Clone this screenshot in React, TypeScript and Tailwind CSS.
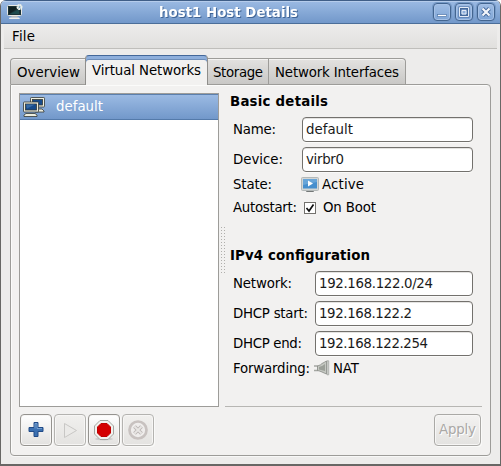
import React from "react";

const font = "font-['DejaVu_Sans',sans-serif]";

function Txt({ w, children, className = "" }: { w: number; children: string; className?: string }) {
  return (
    <svg width={w + 2} height={20} className={`block shrink-0 overflow-visible ${className}`}>
      <text x={0} y={15} textLength={w + 1} fill="currentColor">{children}</text>
    </svg>
  );
}

function Entry({ value, w }: { value: string; w: number }) {
  return (
    <div className="flex h-[25px] flex-1 rounded-[4px] border border-[#73716d] bg-white pl-[3px] text-[#1a1a1a] shadow-[inset_0_1px_0_#e4e3e1,0_1px_0_#fafaf9]">
      <Txt w={w} className="mt-px">{value}</Txt>
    </div>
  );
}

function Field({ label, lw, col, value, w }: { label: string; lw: number; col: string; value: string; w: number }) {
  return (
    <div className="mb-[5px] flex h-[25px] pl-[3px]">
      <div className={`pt-[2px] ${col}`}><Txt w={lw}>{label}</Txt></div>
      <Entry value={value} w={w} />
    </div>
  );
}

function TitleButton({ children }: { children: React.ReactNode }) {
  return (
    <div className="flex h-[18px] w-[18px] items-center justify-center rounded-[4px] border border-[#436590] bg-linear-to-b from-[#a0bde4] to-[#7fa5d6] shadow-[inset_0_0_0_1px_#a5c1e6,0_0_0_1px_#7599c6]">
      <svg width="16" height="16" viewBox="0 0 16 16" className="block shrink-0">{children}</svg>
    </div>
  );
}

function ToolButton({ off, children }: { off?: boolean; children: React.ReactNode }) {
  return (
    <div className={`flex h-8 w-8 items-center justify-center rounded-[4px] border bg-linear-to-b ${off ? "border-[#b4b3b0] from-[#f1f0ee] to-[#e4e3e1]" : "border-[#95938f] from-white to-[#e2e1df]"} shadow-[inset_0_0_0_1px_#f7f6f5,1px_1px_0_#fafaf9]`}>
      {children}
    </div>
  );
}

function Tab({ label, w, cls }: { label: string; w: number; cls: string }) {
  return (
    <div className={`flex h-[26px] border border-b-0 border-[#9d9c99] bg-linear-to-b from-[#e3e2e0] to-[#c9c8c6] pt-[3px] shadow-[inset_0_1px_0_#f4f3f2] ${cls}`}>
      <Txt w={w}>{label}</Txt>
    </div>
  );
}

export default function App() {
  return (
    <div className="h-[466px] w-[501px] bg-white">
      <div className={`flex h-full flex-col overflow-hidden rounded-t-[6px] border-x border-b-2 border-[#686765] bg-[#edeceb] text-[13.333px] leading-5 text-black ${font}`}>
        <header className="flex h-[24px] shrink-0 items-center border-b border-t border-b-[#4b6e99] border-t-[#3f5e87] bg-linear-to-b from-[#9bbae3] to-[#7298ca] pl-[5px] pr-[5px] shadow-[inset_0_1px_0_#b5cceb]">
          <svg width="18" height="18" viewBox="0 0 18 18" className="block">
            <path d="M6 12h5l1 2.500H5z" fill="#b9bab6" />
            <path d="M3.500 14.500h9.500l1 1.500H3z" fill="#eeeeec" />
            <rect x="1.500" y="2.500" width="14" height="10" rx="1" fill="#1b3337" stroke="#e8e8e4" />
            <path d="M3 4h10l-4 3-6 4z" fill="#102022" />
            <path d="M4 11l9-5v5z" fill="#1f4b4d" />
            <circle cx="13.500" cy="4" r="2" fill="#7ca7c1" stroke="#edf1ec" strokeWidth="2" strokeDasharray="1.800 .3" />
          </svg>
          <div className="flex flex-1 justify-center font-bold text-white drop-shadow-[1px_1px_0_#416596]">
            <Txt w={138}>host1 Host Details</Txt>
          </div>
          <div className="flex gap-1">
            <TitleButton><rect x="3.500" y="10.500" width="9" height="2" fill="white" stroke="#5177aa" strokeWidth=".7" /></TitleButton>
            <TitleButton><path d="M4 4h8v8H4z" fill="none" stroke="#45699b" strokeWidth="3" /><path d="M3.500 3.500h9v9h-9z" fill="none" stroke="#e4ecf7" /><path d="M6 6.500h4v3.500H6z" fill="#8fb0dc" stroke="#e4ecf7" /></TitleButton>
            <TitleButton><path d="M4.500 4.500l7 7m0-7l-7 7" stroke="#45699b" strokeWidth="4" /><path d="M4.500 4.500l7 7m0-7l-7 7" stroke="#f3f6fb" strokeWidth="2.200" /></TitleButton>
          </div>
        </header>

        <nav className="mx-[3px] flex h-[25px] shrink-0 items-center border-b border-[#bfbebb] bg-linear-to-b from-[#edeceb] to-[#e1e0de] pl-2">
          <Txt w={22}>File</Txt>
        </nav>

        <main className="flex flex-1 flex-col px-[9px] pb-[8px] pt-[6px]">
          <div className="relative z-10 flex h-[29px] items-end">
            <Tab label="Overview" w={62} cls="w-[75px] rounded-tl-[4px] border-r-0 pl-[6px]" />
            <div className="-mb-px flex h-[30px] w-[123px] shrink-0 overflow-hidden rounded-t-[4px] border border-b-0 border-[#8f8e8b] border-t-[#44689a] bg-[#f2f1f0] pl-[6px] shadow-[inset_0_3px_0_#8eafdc,inset_0_4px_0_#6d8db9]">
              <div className="pt-[4px]"><Txt w={108}>Virtual Networks</Txt></div>
            </div>
            <Tab label="Storage" w={49} cls="w-[61px] border-l-0 pl-[5px]" />
            <Tab label="Network Interfaces" w={123} cls="w-[137px] rounded-tr-[4px] border-l-0 pl-[6px]" />
          </div>

          <section className="flex flex-1 flex-col rounded-b-[4px] rounded-tr-[4px] border border-[#9d9c99] bg-[#f2f1f0] px-[8px] pb-[8px] pt-[8px] shadow-[inset_1px_1px_0_#fbfbfa,0_1px_0_#f8f8f7]">
            <div className="flex h-[314px]">
              <div className="w-[200px] border border-[#9d9c99] bg-white">
                <div className="flex h-[26px] items-center border-b border-t border-b-[#547aaa] border-t-[#5c80ae] bg-linear-to-b from-[#9bbae3] to-[#7298ca] pl-[2px] text-white">
                  <svg width="24" height="24" viewBox="0 0 24 24" className="block">
                    <g stroke="#343936" strokeWidth=".8">
                      <path d="M14 14h6l2 2v1h-9z" fill="#eeeedf" />
                      <rect x="8.500" y="2.500" width="14" height="9.500" rx=".8" fill="#eeeedf" />
                      <rect x="10.500" y="4.500" width="10" height="5.500" fill="#174b8c" />
                      <path d="M4 18.500h9l2 1.500v1.500H2V20z" fill="#eeeedf" />
                      <rect x="1.500" y="7" width="15" height="10" rx=".8" fill="#eeeedf" />
                      <rect x="3.500" y="9" width="11" height="6" fill="#174b8c" />
                    </g>
                    <path d="M4 9.500h9l-8 4z" fill="#376ba5" />
                  </svg>
                  <Txt w={46} className="-mt-[2px] ml-[10px]">default</Txt>
                </div>
              </div>

              <div className="flex w-[6px] items-center justify-center">
                <div className="h-[48px] w-[5px] bg-[radial-gradient(circle,#b0afac_0.6px,transparent_0.9px)] bg-[size:3px_3px]" />
              </div>

              <div className="flex flex-1 flex-col border-b border-[#b7b6b3] pl-[5px] pr-[9px]">
                <h2 className="mb-[6px] mt-[-2px] h-5 font-bold"><Txt w={97}>Basic details</Txt></h2>
                <Field label="Name:" lw={42} col="w-[69px]" value="default" w={46} />
                <Field label="Device:" lw={49} col="w-[69px]" value="virbr0" w={37} />
                <div className="mt-[-3px] flex h-[20px] items-center pl-[3px]">
                  <div className="w-[68px]"><Txt w={38}>State:</Txt></div>
                  <svg width="18" height="16" viewBox="0 0 18 16" className="mt-[2px] block">
                    <path d="M6 13h6l1 2H5z" fill="#737777" />
                    <rect x=".5" y=".5" width="17" height="13" rx="1" fill="#d3d6d5" stroke="#b3b8b8" />
                    <rect x="2" y="2" width="14" height="9.500" fill="#478fcd" />
                    <path d="M2 2h14v3L2 8z" fill="#68a5d8" />
                    <path d="M7 3.500l5 3-5 3z" fill="white" />
                  </svg>
                  <Txt w={41} className="ml-[3px]">Active</Txt>
                </div>
                <div className="mt-[3px] flex h-[20px] items-center pl-[3px]">
                  <div className="w-[71px]"><Txt w={63}>Autostart:</Txt></div>
                  <div className="mt-px h-[12px] w-[12px] border border-[#73716d] bg-white">
                    <svg width="10" height="10" viewBox="0 0 10 10" className="block"><path d="M1.500 5l2.500 3L8.500 1.500" fill="none" stroke="#111" strokeWidth="1.700" /></svg>
                  </div>
                  <Txt w={52} className="ml-[7px]">On Boot</Txt>
                </div>
                <h2 className="mb-[6px] mt-[28px] h-5 font-bold"><Txt w={139}>IPv4 configuration</Txt></h2>
                <Field label="Network:" lw={58} col="w-[82px]" value="192.168.122.0/24" w={113} />
                <Field label="DHCP start:" lw={74} col="w-[82px]" value="192.168.122.2" w={92} />
                <Field label="DHCP end:" lw={68} col="w-[82px]" value="192.168.122.254" w={108} />
                <div className="mt-[-3px] flex h-[20px] items-center pl-[3px]">
                  <div className="w-[81px]"><Txt w={76}>Forwarding:</Txt></div>
                  <svg width="16" height="16" viewBox="0 0 16 16" className="block">
                    <path d="M0 6h4M0 10.500h4" stroke="#a5a7a2" strokeWidth="1.500" />
                    <path d="M3.500 6Q7 5 8 3.500Q10 2.500 12.500 1v13Q10 13 8 12Q6 11 3.500 10.500z" fill="#c5c8c2" stroke="#858883" strokeWidth=".8" />
                    <path d="M5 7Q9 6 11 4v7Q8 10 5 9.500z" fill="#9b9f98" />
                    <path d="M13 .8v14h1.700V.8z" fill="#dfe0dc" stroke="#9a9c98" strokeWidth=".7" />
                  </svg>
                  <Txt w={25} className="ml-[3px]">NAT</Txt>
                </div>
              </div>
            </div>

            <div className="mt-[7px] flex items-center gap-[2px] pl-px">
              <ToolButton>
                <svg width="16" height="16" viewBox="0 0 16 16"><path d="M6 .5h4V5.500h5v4h-5v5H6v-5H1v-4h5z" fill="#3b70b1" stroke="#204a87" /><path d="M7 6.500v-5h2v5h5" fill="none" stroke="#82a9d5" strokeWidth=".8" /></svg>
              </ToolButton>
              <ToolButton off>
                <svg width="16" height="16" viewBox="0 0 16 16"><path d="M2.500 1.500l12 7-12 7z" fill="#ebeae8" stroke="#c8c7c5" /></svg>
              </ToolButton>
              <ToolButton>
                <svg width="22" height="22" viewBox="0 0 22 22"><ellipse cx="11" cy="20" rx="9" ry="1.500" fill="#ccc" /><path d="M7 1.500h8l5.500 5.500v8L15 20.500H7L1.500 15V7z" fill="#f2f2ef" stroke="#a3a5a0" /><path d="M8 4.500h6l3.500 3.500v6L14 17.500H8L4.500 14V8z" fill="#d40000" stroke="#c00000" /></svg>
              </ToolButton>
              <ToolButton off>
                <svg width="22" height="22" viewBox="0 0 22 22"><circle cx="11" cy="11" r="8.500" fill="#efedec" stroke="#c8c2c0" strokeWidth="2.700" /><path d="M7.500 7.500l7 7m0-7l-7 7" stroke="#bbb6b4" strokeWidth="3.800" /><path d="M7.500 7.500l7 7m0-7l-7 7" stroke="#e8e6e4" strokeWidth="1.800" /></svg>
              </ToolButton>
              <div className="ml-auto mr-px flex h-8 w-[47px] items-center justify-center rounded-[4px] border border-[#aaa9a6] bg-linear-to-b from-[#f3f2f1] to-[#e3e2e0] text-[#aaa8a5] shadow-[inset_0_0_0_1px_#f7f6f5,1px_1px_0_#fafaf9] [text-shadow:1px_1px_0_white]">
                <Txt w={36} className="-mt-[2px]">Apply</Txt>
              </div>
            </div>
          </section>
        </main>
      </div>
    </div>
  );
}
